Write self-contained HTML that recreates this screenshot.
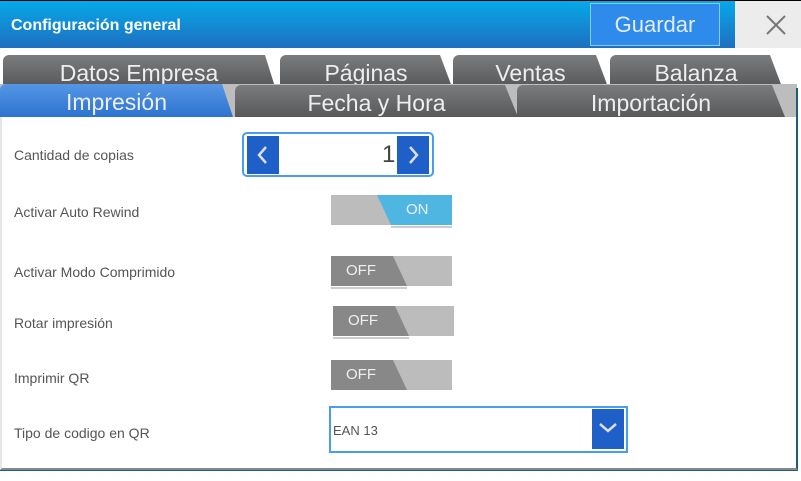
<!DOCTYPE html>
<html><head><meta charset="utf-8"><style>
*{margin:0;padding:0;box-sizing:border-box}
body{width:801px;height:481px;background:#fff;position:relative;overflow:hidden;font-family:"Liberation Sans",sans-serif}
.a{position:absolute}
.hdr{left:0;top:0;width:801px;height:48px;background:linear-gradient(#05a9e9,#1e6fc0);border-top:1px solid #000}
.tab{position:absolute;height:32px;background:linear-gradient(#7b7c7d,#56585a);color:#eee;font-size:23px;text-align:center;line-height:37px;border-radius:6px 6px 0 0}
.lbl{position:absolute;left:14px;font-size:14px;color:#555;line-height:16px}
.tg{position:absolute;width:121px;height:30px;background:#bcbcbc;overflow:hidden}
.off{position:absolute;left:0;top:0;width:80px;height:30px;background:#888;clip-path:polygon(0 0,62px 0,76px 30px,0 30px);color:#f0f0f0;font-size:15px;line-height:30px;padding-left:15px}
.ul{position:absolute;height:2px;background:#ccc}
</style></head><body>
<div class="a hdr"></div>
<div class="a" style="left:11px;top:17px;color:#fff;font-weight:bold;font-size:16px">Configuración general</div>
<div class="a" style="left:590px;top:3px;width:130px;height:43px;background:#2e8aeb;border:1px solid #7fd0ff;color:#e4ecf8;font-size:22px;text-align:center;line-height:42px">Guardar</div>
<div class="a" style="left:735px;top:1px;width:66px;height:47px;background:#ececec"></div>
<svg class="a" style="left:765px;top:14px" width="22" height="22"><path d="M2 2L20 20M20 2L2 20" stroke="#777" stroke-width="2"/></svg>

<div class="tab" style="left:3px;top:55px;width:272px;clip-path:polygon(0 0,262px 0,272px 32px,0 32px)">Datos Empresa</div>
<div class="tab" style="left:280px;top:55px;width:172px;clip-path:polygon(0 0,160px 0,172px 32px,0 32px)">Páginas</div>
<div class="tab" style="left:453px;top:55px;width:155px;clip-path:polygon(0 0,143px 0,155px 32px,0 32px)">Ventas</div>
<div class="tab" style="left:610px;top:55px;width:172px;clip-path:polygon(0 0,160px 0,172px 32px,0 32px)">Balanza</div>

<div class="a" style="left:0;top:84px;width:797px;height:33px;background:#bdbdbd"></div>
<div class="tab" style="left:0;top:84px;width:233px;height:33px;line-height:36px;background:linear-gradient(#5597e5,#2c73d0);clip-path:polygon(0 0,222px 0,233px 33px,0 33px)">Impresión</div>
<div class="tab" style="left:235px;top:85px;width:283px;height:32px;line-height:36px;clip-path:polygon(0 0,270px 0,283px 32px,0 32px)">Fecha y Hora</div>
<div class="tab" style="left:517px;top:85px;width:268px;height:32px;line-height:36px;clip-path:polygon(0 0,255px 0,268px 32px,0 32px)">Importación</div>
<div class="a" style="left:796px;top:88px;width:2px;height:29px;background:#1c5d80"></div>

<div class="a" style="left:0;top:117px;width:798px;height:353px;border-left:2px solid #e6e6e6;border-right:2px solid #1c5d80;border-bottom:2px solid #888"></div>
<div class="a" style="left:0;top:470px;width:798px;height:1px;background:#1c5d80"></div>

<div class="lbl" style="top:147px">Cantidad de copias</div>
<div class="lbl" style="top:204px">Activar Auto Rewind</div>
<div class="lbl" style="top:264px">Activar Modo Comprimido</div>
<div class="lbl" style="top:315px">Rotar impresión</div>
<div class="lbl" style="top:370px">Imprimir QR</div>
<div class="lbl" style="top:425px">Tipo de codigo en QR</div>

<div class="a" style="left:242px;top:132px;width:192px;height:45px;border:2px solid #4a9cf0;border-radius:5px"></div>
<div class="a" style="left:247px;top:136px;width:32px;height:38px;background:#1f5fc8"></div>
<svg class="a" style="left:255px;top:145px" width="16" height="20"><path d="M11 2L4 10L11 18" stroke="#dde" stroke-width="2.5" fill="none"/></svg>
<div class="a" style="left:382px;top:141px;font-size:24px;color:#444">1</div>
<div class="a" style="left:397px;top:136px;width:32px;height:38px;background:#1f5fc8"></div>
<svg class="a" style="left:405px;top:145px" width="16" height="20"><path d="M5 2L12 10L5 18" stroke="#dde" stroke-width="2.5" fill="none"/></svg>

<div class="tg" style="left:331px;top:195px"><div class="a" style="left:0;top:0;width:121px;height:30px;background:#4eb6e0;clip-path:polygon(46px 0,121px 0,121px 30px,60px 30px);color:#eef;font-size:15px;line-height:30px;padding-left:75px">ON</div></div>
<div class="ul" style="left:391px;top:226px;width:61px"></div>

<div class="tg" style="left:331px;top:256px"><div class="off">OFF</div></div>
<div class="ul" style="left:331px;top:287px;width:76px"></div>
<div class="tg" style="left:333px;top:306px"><div class="off">OFF</div></div>
<div class="ul" style="left:333px;top:337px;width:76px"></div>
<div class="tg" style="left:331px;top:360px"><div class="off">OFF</div></div>

<div class="a" style="left:329px;top:406px;width:299px;height:47px;border:2px solid #4a9cf0"></div>
<div class="a" style="left:333px;top:423px;font-size:13px;color:#555">EAN 13</div>
<div class="a" style="left:592px;top:409px;width:32px;height:40px;background:#1f5fc8"></div>
<svg class="a" style="left:598px;top:421px" width="20" height="14"><path d="M2 3L10 10L18 3" stroke="#dde" stroke-width="2.5" fill="none"/></svg>
</body></html>
